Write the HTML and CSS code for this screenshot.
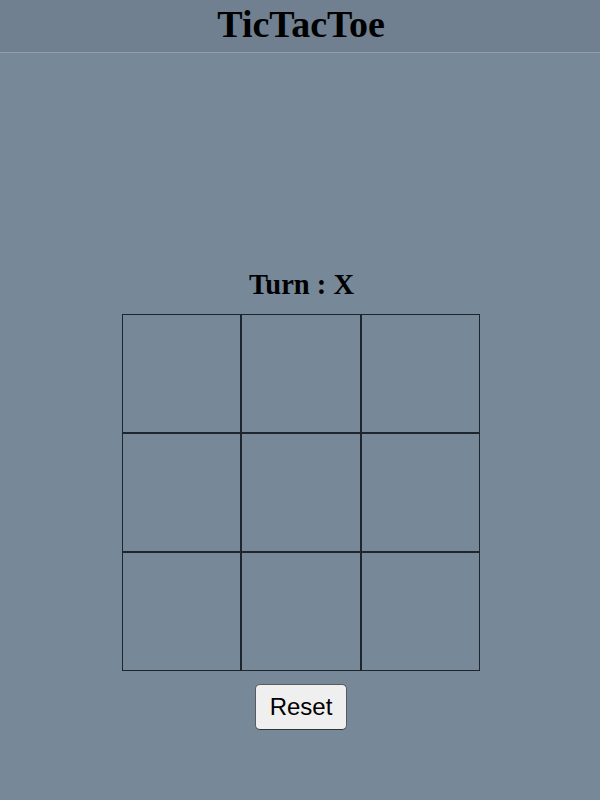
FILE: index.html
```html
<!DOCTYPE html>
<html>
<head>
<meta charset="utf-8">
<link rel="stylesheet" href="styles.css">
</head>
<body>
<header class="header">
  <h1 class="title">TicTacToe</h1>
</header>
<main class="game">
  <div class="turn">Turn : X</div>
  <div class="board">
    <div class="cell"></div><div class="cell"></div><div class="cell"></div>
    <div class="cell"></div><div class="cell"></div><div class="cell"></div>
    <div class="cell"></div><div class="cell"></div><div class="cell"></div>
  </div>
  <button class="reset">Reset</button>
</main>
</body>
</html>
```
FILE: styles.css
```css
html, body {
  margin: 0;
  padding: 0;
  height: 100%;
}
body {
  background: #778899;
  font-family: "Liberation Serif", "Times New Roman", serif;
}
.header {
  background: #708090;
  border-bottom: 1px solid #91a0af;
  height: 52px;
  display: flex;
  align-items: center;
  justify-content: center;
}
.title {
  margin: 0;
  font-size: 38px;
  font-weight: bold;
  color: #000;
  line-height: 1;
  position: relative;
  top: -2px;
  left: 1px;
}
.game {
  display: flex;
  flex-direction: column;
  align-items: center;
  padding-top: 216px;
}
.turn {
  font-size: 28.5px;
  font-weight: bold;
  line-height: 32px;
  margin-bottom: 13px;
  margin-left: 3px;
}
.board {
  display: grid;
  grid-template-columns: repeat(3, 119.33px);
  grid-template-rows: repeat(3, 119px);
  margin-left: 2px;
}
.cell {
  border: 1px solid #1f252c;
  box-sizing: border-box;
}
.reset {
  margin-top: 13px;
  margin-left: 2px;
  font-family: "Liberation Sans", Arial, sans-serif;
  font-size: 24px;
  padding: 8px 14px;
  background: #efefef;
  border: 1px solid #5a5a5a;
  border-bottom-color: #333;
  border-radius: 5px;
  color: #000;
}
```
